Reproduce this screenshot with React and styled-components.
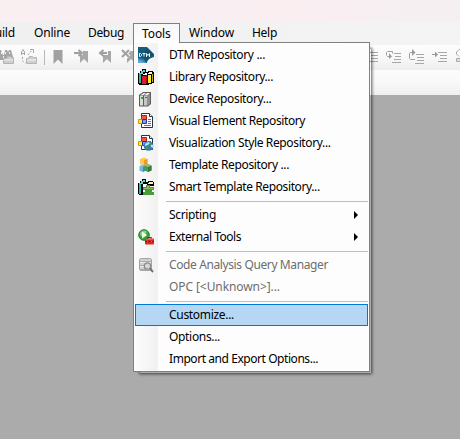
import React from "react";
import styled, { createGlobalStyle } from "styled-components";

const GlobalStyle = createGlobalStyle`
  * { box-sizing: border-box; }
  body { margin: 0; overflow: hidden; background: #ababab; }
`;

const Window = styled.div`
  position: relative;
  display: flex;
  flex-direction: column;
  width: 460px;
  height: 439px;
  overflow: hidden;
  background: #ababab;
  font: 12px/22px "Noto Sans", "Open Sans", sans-serif;
  color: #000;
`;
const TitleBar = styled.div`
  height: 22px;
  flex: none;
  background: linear-gradient(90deg, #f9eff1 0%, #faeef1 65%, #f7eff1 82%, #f5eff1 100%);
`;
const MenuBar = styled.nav`
  display: flex;
  flex: none;
  height: 23px;
  padding-top: 1px;
  background: linear-gradient(90deg, #f0f0f0, #f4f4f4);
`;
const MenuTitle = styled.div`
  flex: none;
  width: ${(p) => p.$width}px;
  height: 20px;
  padding-left: ${(p) => p.$pad}px;
  line-height: 20px;
  white-space: nowrap;
  letter-spacing: ${(p) => p.$track}px;
`;
const OpenMenuTitle = styled(MenuTitle)`
  position: relative;
  z-index: 2;
  border: 1px solid #808080;
  border-bottom: 0;
  line-height: 19px;
  background: linear-gradient(#f7f7f7, #fdfdfd);
`;
const FirstTitle = styled(MenuTitle)`
  margin-left: -13px;
`;
const Toolbar = styled.div`
  display: flex;
  flex: none;
  height: 25px;
  padding-top: 4px;
  background: linear-gradient(#fdfdfd, #f8f8f8 50%, #eeeeee);
`;
const SecondBar = styled.div`
  flex: none;
  height: 25px;
  background: linear-gradient(#fcfcfc, #f8f8f8 50%, #efefef);
`;
const ToolIcon = styled.svg`
  flex: none;
  display: block;
  width: ${(p) => p.$width || 16}px;
  height: 16px;
  margin-right: ${(p) => p.$gap}px;
  overflow: visible;
`;
const ToolDivider = styled.div`
  flex: none;
  width: 1px;
  height: 15px;
  margin: 1px 8px 0 0;
  background: #b8b8b8;
`;
const ToolSpacer = styled.div`
  flex: none;
  width: 225px;
`;

const Menu = styled.div`
  position: absolute;
  z-index: 1;
  left: 133px;
  top: 42px;
  width: 237px;
  height: 330px;
  padding: 1px 1px 0;
  border: 1px solid #808080;
  background: linear-gradient(90deg, #fcfcfc, #f1f1f1 24px, #fdfdfd 24px);
  background-clip: padding-box;
`;
const MenuShadow = styled.div`
  position: absolute;
  left: 140px;
  top: 49px;
  width: 231px;
  height: 324px;
  box-shadow: 0 0 3px 1px rgba(0, 0, 0, 0.65);
`;
const Row = styled.div`
  display: flex;
  align-items: center;
  height: 22px;
  padding-left: 3px;
  border: 1px solid transparent;
  color: ${(p) => (p.$disabled ? "#6d6d6d" : "#000")};
`;
const SelectedRow = styled(Row)`
  border-color: #0078d7;
  background: #b5d7f3;
`;
const IconSlot = styled.div`
  flex: none;
  width: 30px;
  height: 16px;
`;
const MenuIcon = styled.svg`
  display: block;
  width: 16px;
  height: 16px;
  margin-left: -1px;
`;
const Label = styled.span`
  flex: 1;
  white-space: nowrap;
  line-height: 20px;
  letter-spacing: ${(p) => p.$track}px;
`;
const Arrow = styled.svg`
  width: 4px;
  height: 8px;
  margin-right: 9px;
`;
const Separator = styled.div`
  height: 6px;
  padding-top: 3px;
  margin-left: 31px;
  &::before { content: ""; display: block; height: 1px; background: #bdbdbd; }
`;

const Dtm = () => (
  <MenuIcon viewBox="0 0 16 16">
    <path fill="#155c7e" d="M0 0h16v16H0z" />
    <path fill="#3c83bb" d="M0 11l5 1 4 4H0z" />
    <path fill="#6ba6cf" d="M0 13l4 1 3 2H0z" />
    <path fill="#eef4f7" d="M9 0h7v7l-3-3zM9 16c0-3 3-5 7-6v6z" />
    <path fill="#14516e" d="M9 1l3 3 4 4-5 3-3 4-3-7z" />
    <path stroke="#f6fbfd" fill="none" d="M1.5 6.5h1l1 1v1l-1 1h-1zM4.5 6.5h3M6 6.5v3M8.5 10V6.5l1.5 2 1.5-2V10" />
  </MenuIcon>
);
const Library = () => (
  <MenuIcon viewBox="0 0 16 16" shapeRendering="crispEdges">
    <path fill="#000" d="M0 4h2V2h2V0h4v3h2V2h5v1h1v11h-2v1h-3v1H1v-1H0z" />
    <path fill="#19bcc0" d="M1 5h2v9H1z" />
    <path fill="#48e1e1" d="M1 4h2V2h2V1h2v2H5v2H1z" />
    <path fill="#e01b20" d="M4 7h4v8H4z" />
    <path fill="#fff" d="M5 5h2V4h2v2H5z" />
    <path fill="#a31115" d="M8 6h1v8H8z" />
    <path fill="#ffec35" d="M10 6h3v8h-3z" />
    <path fill="#fffbd0" d="M10 4h1V3h3v2h-4z" />
    <path fill="#c8ae1f" d="M14 5h1v8h-1z" />
  </MenuIcon>
);
const Device = () => (
  <MenuIcon viewBox="0 0 16 16">
    <path fill="#5c5c5c" d="M1 4l4-3h8v12l-3 2.5H1z" />
    <path fill="#dadada" d="M2 5h3v9.5H2z" />
    <path fill="#f2f2f2" d="M2 4.5L5.5 2H8L5 4.5zM6 4.5L9 2h3L9.5 4.5z" />
    <path fill="#c6c6c6" d="M6 5h3.5v9.5H6z" />
    <path fill="#909090" d="M10 4.8L12 3v9.8l-2 1.7z" />
    <path fill="#16b53b" d="M3 6h2v2H3z" />
    <path fill="#dc2929" d="M7 6h2v1H7z" />
  </MenuIcon>
);
const page = (
  <>
    <path fill="#fff" stroke="#263246" d="M3.5.5h8l3 3v11h-11z" />
    <path fill="#fff" stroke="#263246" d="M11.5.5v3h3" />
    <path stroke="#68778a" d="M10 6.5h3M10 8.5h3M10 10.5h3M6 12.5h7" />
    <path fill="#ee5a48" stroke="#c01818" d="M3.5 2.5h5v5h-5z" />
    <path fill="#ffed36" stroke="#c89b00" d="M.5 6.5h4v4h-4z" />
    <path fill="#8795f0" stroke="#24388e" d="M4.5 6.5h4v4h-4z" />
  </>
);
const Visual = () => <MenuIcon viewBox="0 0 16 16">{page}</MenuIcon>;
const VisualStyle = () => (
  <MenuIcon viewBox="0 0 16 16">
    {page}
    <circle cx="10.5" cy="11" r="4.8" fill="#3478be" />
    <path fill="#bce0f3" d="M7 9l3-2 2 1-2 2-3 1zM12 9l3 1v3l-2-1z" />
    <path fill="#3a9b4b" d="M7 11l4 1-1 3-3-2zM12 7l2 2-2 2z" />
  </MenuIcon>
);
const Template = () => (
  <MenuIcon viewBox="0 0 16 16">
    <path fill="#ffc65c" d="M2 2l4-1.5L9.5 2v5L6 8.5 2 7z" />
    <path fill="#f09c24" d="M6 3.3L9.5 2v5L6 8.5z" />
    <path fill="#74b6dd" d="M1.5 9L5 7.8 7.5 9v4.5L5 15l-3.5-1.3z" />
    <path fill="#3989b8" d="M5 10l2.5-1v4.5L5 15z" />
    <path fill="#4f9b4c" d="M6.5 8.5L10 7l3.5 1.5v5L10 15l-3.5-1.5z" />
    <path fill="#347c37" d="M10 10l3.5-1.5v5L10 15z" />
    <path fill="#86c47a" d="M6.5 8.5L10 7l3.5 1.5L10 10z" />
  </MenuIcon>
);
const SmartTemplate = () => (
  <MenuIcon viewBox="0 0 16 16" shapeRendering="crispEdges">
    <path fill="#000" d="M0 4h2V2h2V0h4v3h2V2h5v1h1v4H5v9H1v-1H0z" />
    <path fill="#19bcc0" d="M1 5h2v10H1z" />
    <path fill="#48e1e1" d="M1 4h2V2h2V1h2v2H5v2H1z" />
    <path fill="#fff" d="M5 5h4v3H5z" />
    <path fill="#fff8a5" d="M10 4h1V3h4v2h-5z" />
    <path fill="#4c9b38" d="M5 8h3V6h4v2h4v3h-2v2h2v3H5v-3h2v-2H5z" />
    <path fill="#83bf5c" d="M6 9h3V7h2v2h4v1H6z" />
  </MenuIcon>
);
const ExternalTools = () => (
  <MenuIcon viewBox="0 0 16 16">
    <circle cx="6" cy="6" r="5.3" fill="#35a53a" stroke="#178625" />
    <path fill="#87d17e" d="M2 6a4 4 0 0 1 7-3L5 8z" />
    <path fill="#fff" d="M4 2.5L9 6 4 9.5z" />
    <path fill="none" stroke="#9e1717" d="M9.5 9.5v-1h4v1" />
    <rect x="7" y="9.5" width="9" height="6" rx="1" fill="#d52923" />
    <path stroke="#a20f10" d="M7 12.5h9" />
    <path fill="#f05c50" d="M8 10h7v1H8zM9 12h1v1H9zM13 12h1v1h-1z" />
  </MenuIcon>
);
const Analysis = () => (
  <MenuIcon viewBox="0 0 16 16">
    <path fill="#d0d0d0" stroke="#a4a4a4" d="M1.5 2.5q0-1 2-1h8q2 0 2 1v10q0 1-2 1h-8q-2 0-2-1z" />
    <path stroke="#aaa" d="M2 4.5h11M2 8.5h11M2 12.5h6" />
    <path stroke="#ededed" d="M2 5.5h11M2 9.5h5" />
    <circle cx="9.5" cy="9" r="3.2" fill="#d2d6d8" stroke="#8c8c8c" strokeWidth="1.3" />
    <path stroke="#747474" strokeWidth="2" d="M12 11.5l3 3.5" />
  </MenuIcon>
);

const Find = () => (
  <ToolIcon $gap={6} $width={14} viewBox="0 0 14 16">
    <path fill="#a5a5a5" d="M-2 5l1-4h2l2 5h1l1-5h2l1 2 1-2h2l2 7v3H-2z" />
    <path stroke="#eee" d="M1.5 3v2M5.5 3v2M9.5 3v2M3.5 7v2" />
    <path fill="#cecece" stroke="#b4b4b4" d="M3.5 9.5h3l1-2h3l1 1h2v6h-10z" />
    <path fill="#e0e0e0" d="M4 10h9v2H4z" />
  </ToolIcon>
);
const Replace = () => (
  <ToolIcon $gap={8} viewBox="0 0 16 16">
    <path fill="none" stroke="#a6a6a6" d="M1.5 6V3L3 .5 4.5 3v3M2 4.5h2" />
    <path fill="none" stroke="#a6a6a6" strokeDasharray="2 1.5" d="M2.5 8v4l3 2M8 6l4-5" />
    <path fill="none" stroke="#a6a6a6" d="M10 .5h3.5V4" />
    <path fill="#d0d0d0" stroke="#b5b5b5" d="M6.5 9.5h2l1-2h3l1 1h3v6h-10z" />
    <path fill="#e3e3e3" d="M7 10h9v2H7z" />
  </ToolIcon>
);
const Bookmark = () => (
  <ToolIcon $gap={10} $width={11} viewBox="0 0 11 16">
    <path fill="#a1a1a1" d="M.5 1h9v14L5 10.5.5 15z" />
  </ToolIcon>
);
const flag = <path fill="#a8a8a8" d="M6 2h8v12l-4-4-4 4z" />;
const NextBookmark = () => (
  <ToolIcon $gap={8} viewBox="0 0 16 16">
    {flag}
    <path stroke="#f7f7f7" strokeWidth="4" d="M0 4h9" />
    <path fill="none" stroke="#a0a0a0" strokeWidth="2" d="M0 4h8M4.5 1L8 4 4.5 7" />
  </ToolIcon>
);
const PrevBookmark = () => (
  <ToolIcon $gap={7} viewBox="0 0 16 16">
    <path fill="#a8a8a8" d="M5 2h8v12l-4-4-4 4z" />
    <path stroke="#f7f7f7" strokeWidth="4" d="M1 4h9" />
    <path fill="none" stroke="#a0a0a0" strokeWidth="2" d="M2 4h7M5.5 1L2 4l3.5 3" />
  </ToolIcon>
);
const ClearBookmark = () => (
  <ToolIcon $gap={0} viewBox="0 0 16 16">
    {flag}
    <path stroke="#f7f7f7" strokeWidth="4" d="M1 1l7 7M8 1L1 8" />
    <path stroke="#a0a0a0" strokeWidth="2" d="M1 1l7 7M8 1L1 8" />
  </ToolIcon>
);
const StepOver = () => (
  <ToolIcon $gap={7} viewBox="0 0 16 16">
    <path stroke="#a6a6a6" d="M7 3.5h9M9 6.5h7M9 9.5h7M7 12.5h9" />
  </ToolIcon>
);
const StepInto = () => (
  <ToolIcon $gap={7} viewBox="0 0 16 16">
    <path stroke="#a6a6a6" d="M9 4.5h7M10 7.5h6M9 10.5h7M7 13.5h9" />
    <path fill="none" stroke="#a0a0a0" d="M1.5 6V3.5l1-1h5v2M1.5 6.5l1 1h2" />
    <path fill="#999" d="M4 4l3 3.5L4 10z" />
  </ToolIcon>
);
const StepOut = () => (
  <ToolIcon $gap={7} viewBox="0 0 16 16">
    <path stroke="#a6a6a6" d="M8 5.5h8M9 8.5h7M9 11.5h7M7 14.5h9" />
    <path fill="none" stroke="#a0a0a0" d="M5 3.5H2l-.5 1v5l1 1H7" />
    <path fill="#999" d="M4 0l3.5 3.5L4 7z" />
  </ToolIcon>
);
const RunTo = () => (
  <ToolIcon $gap={8} viewBox="0 0 16 16">
    <path stroke="#a6a6a6" d="M7 3.5h9M9 6.5h7M9 9.5h7M7 12.5h9" />
    <path stroke="#999" d="M1 5.5h4" />
    <path fill="#999" d="M4 2.5l3 3-3 3z" />
  </ToolIcon>
);
const Cycle = () => (
  <ToolIcon $gap={0} viewBox="0 0 16 16">
    <path fill="none" stroke="#aaa" d="M5 .5H4L1.5 3v2L4 7.5" />
    <path fill="#ddd" stroke="#aaa" d="M1.5 9.5h6v3h-6z" />
  </ToolIcon>
);

const entries = [
  { text: "DTM Repository ...", track: -0.346, Icon: Dtm },
  { text: "Library Repository...", track: -0.379, Icon: Library },
  { text: "Device Repository...", track: -0.364, Icon: Device },
  { text: "Visual Element Repository", track: -0.407, Icon: Visual },
  { text: "Visualization Style Repository...", track: -0.36, Icon: VisualStyle },
  { text: "Template Repository ...", track: -0.365, Icon: Template },
  { text: "Smart Template Repository...", track: -0.394, Icon: SmartTemplate },
  null,
  { text: "Scripting", track: -0.334, submenu: true },
  { text: "External Tools", track: -0.474, Icon: ExternalTools, submenu: true },
  null,
  { text: "Code Analysis Query Manager", track: -0.388, Icon: Analysis, disabled: true },
  { text: "OPC [<Unknown>]...", track: -0.083, disabled: true },
  null,
  { text: "Customize...", track: -0.309, selected: true },
  { text: "Options...", track: -0.325 },
  { text: "Import and Export Options...", track: -0.439 },
];

function Entry({ text, track, Icon, submenu, disabled, selected }) {
  const Item = selected ? SelectedRow : Row;
  return (
    <Item $disabled={disabled}>
      <IconSlot>{Icon && <Icon />}</IconSlot>
      <Label $track={track}>{text}</Label>
      {submenu && (
        <Arrow viewBox="0 0 4 8">
          <path d="M0 0l4 4-4 4z" />
        </Arrow>
      )}
    </Item>
  );
}

export default function App() {
  return (
    <>
      <GlobalStyle />
      <Window>
        <TitleBar />
        <MenuBar>
          <FirstTitle $width={38} $pad={0} $track={-0.158}>Build</FirstTitle>
          <MenuTitle $width={54} $pad={9} $track={-0.194}>Online</MenuTitle>
          <MenuTitle $width={54} $pad={9} $track={-0.341}>Debug</MenuTitle>
          <OpenMenuTitle $width={47} $pad={8} $track={-0.1}>Tools</OpenMenuTitle>
          <MenuTitle $width={63} $pad={9} $track={-0.084}>Window</MenuTitle>
          <MenuTitle $width={42} $pad={9} $track={-0.284}>Help</MenuTitle>
        </MenuBar>
        <Toolbar>
          <Find />
          <Replace />
          <ToolDivider />
          <Bookmark />
          <NextBookmark />
          <PrevBookmark />
          <ClearBookmark />
          <ToolSpacer />
          <StepOver />
          <StepInto />
          <StepOut />
          <RunTo />
          <Cycle />
        </Toolbar>
        <SecondBar />
        <MenuShadow />
        <Menu>
          {entries.map((e, i) => (e ? <Entry key={i} {...e} /> : <Separator key={i} />))}
        </Menu>
      </Window>
    </>
  );
}
